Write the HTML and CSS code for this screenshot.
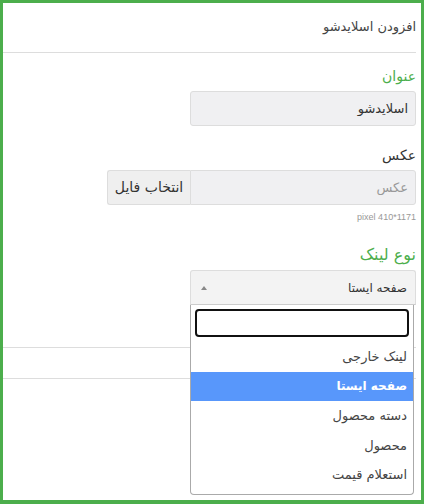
FILE: index.html
```html
<!DOCTYPE html>
<html lang="fa" dir="rtl">

<head>
    <meta charset="UTF-8">
    <meta name="viewport" content="width=device-width, initial-scale=1.0">
    <title>افزودن اسلایدشو</title>
    <link rel="stylesheet" href="styles.css">
</head>

<body>
    <div class="frame">
        <div class="panel">
            <div class="panel-heading">افزودن اسلایدشو</div>
            <div class="panel-body">
                <div class="form-group">
                    <label class="label-green">عنوان</label>
                    <input type="text" class="form-control" value="اسلایدشو" readonly>
                </div>
                <div class="form-group">
                    <label>عکس</label>
                    <div class="input-group">
                        <input type="text" class="form-control" placeholder="عکس" readonly>
                        <span class="btn-file">انتخاب فایل</span>
                    </div>
                    <p class="help">pixel 410*1171</p>
                </div>
                <div class="form-group">
                    <label class="label-green">نوع لینک</label>
                    <div class="select2">
                        <div class="select2-choice">
                            <span>صفحه ایستا</span>
                            <b class="arrow"></b>
                        </div>
                        <div class="select2-drop">
                            <div class="select2-search">
                                <input type="text">
                            </div>
                            <ul class="select2-results">
                                <li>لینک خارجی</li>
                                <li class="highlighted">صفحه ایستا</li>
                                <li>دسته محصول</li>
                                <li>محصول</li>
                                <li>استعلام قیمت</li>
                            </ul>
                        </div>
                    </div>
                </div>
            </div>
            <div class="panel-footer"></div>
        </div>
    </div>
</body>

</html>
```

FILE: styles.css
```css
body {
    margin: 0;
    font-family: "DejaVu Sans", sans-serif;
    background-color: #fff;
    color: #333;
}

.frame {
    width: 424px;
    height: 504px;
    box-sizing: border-box;
    border: 3px solid #4cae4c;
    border-bottom-width: 4px;
    overflow: hidden;
}

.panel {
    padding-right: 5px;
}

.panel-heading {
    height: 49px;
    line-height: 47px;
    font-size: 13px;
    color: #444;
    border-bottom: 1px solid #ddd;
}

.panel-body {
    padding-top: 13px;
}

.form-group {
    margin-bottom: 19px;
}

.form-group label {
    display: block;
    font-size: 14px;
    line-height: 20px;
    margin-bottom: 5px;
}

.label-green {
    color: #4cae4c;
}

.form-control {
    display: block;
    box-sizing: border-box;
    width: 226px;
    height: 35px;
    padding: 0 7px;
    font: inherit;
    font-size: 13px;
    color: #333;
    background-color: #f0f0f2;
    border: 1px solid #ddd;
    border-radius: 3px;
    direction: rtl;
}

.form-control::placeholder {
    color: #999;
}

.input-group {
    display: flex;
    width: 309px;
}

.input-group .form-control {
    border-radius: 0 3px 3px 0;
}

.btn-file {
    flex: 1;
    box-sizing: border-box;
    height: 35px;
    line-height: 33px;
    text-align: center;
    font-size: 14px;
    color: #333;
    background-color: #efefef;
    border: 1px solid #ddd;
    border-right: none;
    border-radius: 3px 0 0 3px;
}

.help {
    margin: 7px 0 0;
    font-family: "Liberation Sans", sans-serif;
    font-size: 9px;
    color: #999;
}

.form-group:last-child {
    margin-top: 23px;
    margin-bottom: 0;
}

.form-group:last-child label {
    font-size: 16px;
}

.select2 {
    position: relative;
    width: 226px;
}

.select2-choice {
    display: flex;
    align-items: center;
    justify-content: space-between;
    box-sizing: border-box;
    height: 35px;
    padding: 0 8px 0 10px;
    font-size: 12px;
    background-color: #f3f3f3;
    border: 1px solid #ddd;
    border-bottom-color: #ccc;
    border-radius: 3px 3px 0 0;
}

.arrow {
    width: 0;
    height: 0;
    border-left: 3px solid transparent;
    border-right: 3px solid transparent;
    border-bottom: 4px solid #888;
}

.select2-drop {
    position: absolute;
    top: 35px;
    right: 2px;
    width: 224px;
    box-sizing: border-box;
    background-color: #fff;
    border: 1px solid #aaa;
    border-top: none;
    border-radius: 0 0 4px 4px;
    padding-bottom: 4px;
    z-index: 2;
}

.select2-search {
    padding: 4px 4px 5px;
}

.select2-search input {
    display: block;
    box-sizing: border-box;
    width: 100%;
    height: 28px;
    border: 2px solid #111;
    border-radius: 4px;
    outline: none;
}

.select2-results {
    list-style: none;
    margin: 0;
    padding: 0;
}

.select2-results li {
    height: 29.5px;
    line-height: 29px;
    padding-right: 6px;
    font-size: 13px;
    color: #444;
}

.select2-results li.highlighted {
    background-color: #5897fb;
    color: #fff;
    font-weight: bold;
    font-size: 12px;
}

.panel-footer {
    margin-top: 42px;
    height: 30px;
    border-top: 1px solid #ddd;
    border-bottom: 1px solid #ddd;
}
```
